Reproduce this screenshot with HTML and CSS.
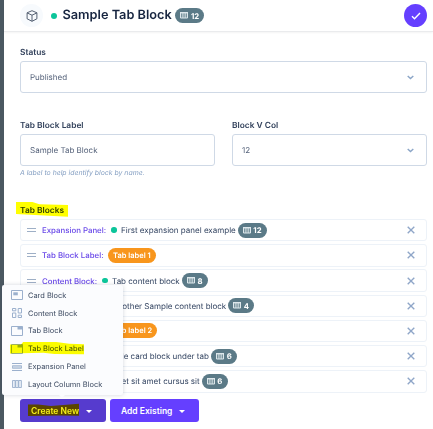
FILE: index.html
```html
<!DOCTYPE html>
<html lang="en">
<head>
<meta charset="utf-8">
<title>Sample Tab Block</title>
<link rel="stylesheet" href="styles.css">
</head>
<body>
<svg class="defs" width="0" height="0">
  <symbol id="cols" viewBox="0 0 8 7"><path d="M.5.5h7v5.500h-7z" fill="#ffffff30" stroke="currentColor" stroke-width="1"/><path d="M2.900.5v5.500M5.200.5v5.500" stroke="currentColor" stroke-width=".9"/><path d="M0 .7h8" stroke="currentColor" stroke-width="1.4"/></symbol>
  <symbol id="x" viewBox="0 0 8 8"><path d="M.7.7l6.600 6.600M7.300.7L.7 7.300" fill="none" stroke="currentColor" stroke-width="1.350"/></symbol>
  <symbol id="down" viewBox="0 0 7 5"><path d="M.7.9l2.800 2.700L6.300.9" fill="none" stroke="currentColor" stroke-width="1.400"/></symbol>
  <symbol id="tab" viewBox="0 0 12 10"><path d="M.5.5h11v9H.5z" fill="none" stroke="currentColor"/><path d="M6.500.5h5v3h-5z" fill="currentColor"/></symbol>
</svg>
<div class="panel">
  <header class="header">
    <span class="cube"><svg width="12" height="12" viewBox="0 0 12 12"><path d="M6 .7l4.900 2.100v6L6 11.300 1.100 8.800v-6zM1.100 2.900L6 5.200l4.900-2.300M6 5.200v6" fill="none" stroke="currentColor" stroke-width=".95" stroke-linejoin="round"/></svg></span>
    <i class="dot dot-title"></i>
    <h1 class="title">Sample Tab Block</h1>
    <span class="badge badge-title"><svg width="8" height="7"><use href="#cols"/></svg>12</span>
    <button class="done" aria-label="Done"><svg width="10" height="8" viewBox="0 0 10 8"><path d="M1 4.300l2.500 2.500L9 1" fill="none" stroke="#fff" stroke-width="1.400"/></svg></button>
  </header>
  <main class="body">
    <section class="field status">
      <label class="label">Status</label>
      <div class="input"><span>Published</span><svg width="7" height="5"><use href="#down"/></svg></div>
    </section>
    <div class="pair">
      <section class="field">
        <label class="label">Tab Block Label</label>
        <div class="input"><span>Sample Tab Block</span></div>
        <p class="help">A label to help identify block by name.</p>
      </section>
      <section class="field">
        <label class="label">Block V Col</label>
        <div class="input"><span>12</span><svg width="7" height="5"><use href="#down"/></svg></div>
      </section>
    </div>
    <h2 class="label blocks-title">Tab Blocks<i class="marker marker-title"></i></h2>
    <div class="rows">
      <div class="row"><i class="grip"></i><b class="kind">Expansion Panel:</b><i class="dot"></i><span class="name">First expansion panel example</span><span class="badge"><svg width="8" height="7"><use href="#cols"/></svg>12</span><svg class="remove" width="8" height="8"><use href="#x"/></svg></div>
      <div class="row"><i class="grip"></i><b class="kind">Tab Block Label:</b><span class="tag">Tab label 1</span><svg class="remove" width="8" height="8"><use href="#x"/></svg></div>
      <div class="row"><i class="grip"></i><b class="kind">Content Block:</b><i class="dot"></i><span class="name">Tab content block</span><span class="badge one"><svg width="8" height="7"><use href="#cols"/></svg>8</span><svg class="remove" width="8" height="8"><use href="#x"/></svg></div>
      <div class="row"><i class="grip"></i><b class="kind">Content Block:</b><i class="dot"></i><span class="name">Another Sample content block</span><span class="badge one"><svg width="8" height="7"><use href="#cols"/></svg>4</span><svg class="remove" width="8" height="8"><use href="#x"/></svg></div>
      <div class="row"><i class="grip"></i><b class="kind">Tab Block Label:</b><span class="tag">Tab label 2</span><svg class="remove" width="8" height="8"><use href="#x"/></svg></div>
      <div class="row"><i class="grip"></i><b class="kind">Card Block:</b><i class="dot"></i><span class="name">Sample card block under tab</span><span class="badge one"><svg width="8" height="7"><use href="#cols"/></svg>6</span><svg class="remove" width="8" height="8"><use href="#x"/></svg></div>
      <div class="row"><i class="grip"></i><b class="kind">Card Block:</b><i class="dot"></i><span class="name">Laoreet sit amet cursus sit</span><span class="badge one"><svg width="8" height="7"><use href="#cols"/></svg>6</span><svg class="remove" width="8" height="8"><use href="#x"/></svg></div>
    </div>
    <div class="actions">
      <button class="btn btn-create"><span>Create New</span><i class="caret"></i><i class="marker marker-create"></i></button>
      <button class="btn btn-add"><span>Add Existing</span><i class="caret"></i></button>
    </div>
  </main>
</div>
<nav class="menu">
  <a class="item"><svg width="12" height="10" viewBox="0 0 12 10"><path d="M.5.5h11v9H.5z" fill="none" stroke="currentColor"/><path d="M2.300 2.300h4.500v3H2.300z" fill="currentColor"/></svg><span>Card Block</span></a>
  <a class="item"><svg width="12" height="10" viewBox="0 0 12 10"><path d="M1.500.5h3.300v2.300H1.500zM1.500 5h3.300v4.500H1.500zM7.200.5h3.300V5H7.200zM7.200 7.200h3.300v2.300H7.200z" fill="none" stroke="currentColor"/></svg><span>Content Block</span></a>
  <a class="item"><svg width="12" height="10"><use href="#tab"/></svg><span>Tab Block</span></a>
  <a class="item"><svg width="12" height="10"><use href="#tab"/></svg><span>Tab Block Label</span><i class="marker marker-menu"></i></a>
  <a class="item"><svg width="12" height="10" viewBox="0 0 12 10"><path d="M1 1.500h10M1 8.500h10" stroke="currentColor"/><path d="M1.500 3.700h9v2.600h-9z" fill="#cbd6e4" stroke="currentColor" stroke-width=".8"/></svg><span>Expansion Panel</span></a>
  <a class="item"><svg width="12" height="10" viewBox="0 0 12 10"><path d="M1.500 1.500h2.700v7H1.500zM4.600 1.500h2.700v7H4.600zM7.700 1.500h2.700v7H7.700z" fill="#e9eff7" stroke="currentColor" stroke-width=".9"/></svg><span>Layout Column Block</span></a>
</nav>
</body>
</html>
```
FILE: styles.css
```css
* { box-sizing: border-box; }
body { margin: 0; width: 433px; height: 429px; overflow: hidden; position: relative; background: #4b5861; font-family: Inter, sans-serif; color: #334461; text-rendering: geometricPrecision; }
.defs { position: absolute; }
svg { flex: none; display: block; }
h1, h2, p { margin: 0; }
button { border: 0; padding: 0; font: inherit; }
.panel { margin-left: 4px; height: 429px; background: #fff; }
.header { height: 32px; display: flex; align-items: center; padding: 0 6px 0 16px; border-bottom: 1px solid #eaebed; box-shadow: 0 1px 2px #0000000c; }
.cube { width: 23px; height: 23px; border-radius: 50%; background: #f7fafd; color: #4c596c; display: grid; place-items: center; }
.dot { width: 5.500px; height: 5.500px; border-radius: 50%; background: #0cc59a; flex: none; margin: 0 4.500px 0 5px; }
.dot-title { width: 6px; height: 6px; margin: 0 5.500px 0 8px; }
.title { font-size: 12.750px; line-height: 16px; padding-top: 1.500px; font-weight: 600; color: #172540; white-space: nowrap; }
.badge { width: 29px; height: 15px; border-radius: 8px; background: #5b7a87; color: #fff; font-size: 7.800px; font-weight: 700; display: flex; align-items: center; justify-content: center; gap: 2.500px; margin-left: 2px; flex: none; }
.badge.one { width: 26px; }
.badge svg { color: #dde7eb; }
.badge-title { margin-left: 3.500px; }
.done { margin-left: auto; width: 23px; height: 23px; border-radius: 50%; background: #653fff; display: grid; place-items: center; }
.body { padding: 15px 6px 0 16px; }
.label { display: block; font-size: 8.400px; line-height: 12px; font-weight: 600; color: #33425c; white-space: nowrap; }
.input { margin-top: 2.300px; height: 31.300px; border: 1px solid #cfd9e6; border-radius: 3px; padding: 1px 12px 0 9px; display: flex; align-items: center; justify-content: space-between; font-size: 8px; color: #55627a; }
.input svg { color: #8ba5c7; }
.pair { display: grid; grid-template-columns: 195px 195px; gap: 17px; margin-top: 27.400px; }
.help { font-size: 6.900px; line-height: 10px; font-style: italic; color: #86a0c3; margin-top: 2.400px; white-space: nowrap; }
.blocks-title { position: relative; margin-top: 26.700px; width: 60px; }
.rows { margin-top: 2.300px; display: grid; gap: 2.700px; }
.row { height: 22.500px; border: 1px solid #edf2f8; border-radius: 3px; display: flex; align-items: center; padding: 0 11px 0 6px; font-size: 8px; white-space: nowrap; }
.grip { width: 9px; height: 4px; border-top: 1px solid #9eafc6; border-bottom: 1px solid #9eafc6; flex: none; margin-right: 6px; }
.kind { font-size: 7.850px; font-weight: 500; color: #6847e8; flex: none; }
.tag { height: 15px; border-radius: 8px; background: #f8961d; color: #fff; font-size: 7.500px; font-weight: 600; padding: 0 5px; line-height: 15px; margin-left: 4.500px; }
.remove { margin-left: auto; color: #8fa6c8; }
.actions { display: flex; gap: 4px; margin-top: 6.500px; }
.btn { position: relative; height: 23px; border-radius: 3px; color: #fff; background: #653fff; font-size: 8.500px; font-weight: 600; display: flex; align-items: center; justify-content: space-between; padding: 1px 14px 0 11px; white-space: nowrap; }
.btn-create { width: 86px; background: #563bce; }
.btn-add { width: 89px; }
.caret { border: 3px solid transparent; border-top-color: currentColor; border-bottom: 0; }
.menu { position: absolute; left: 2px; top: 285px; width: 121px; height: 110px; background: #fbfcfe; border-radius: 2px; box-shadow: 0 0 4px #2b3b5035; padding: 1px 0 0 9px; }
.menu::after { content: ""; position: absolute; left: 57px; top: 110px; border: 3px solid transparent; border-top-color: #fbfcfe; border-bottom: 0; }
.item { position: relative; height: 17.900px; display: flex; align-items: center; gap: 5px; font-size: 7.450px; color: #3b4960; white-space: nowrap; }
.item span { padding-top: .5px; }
.item svg { color: #9bb0cd; }
.marker { position: absolute; background: #ff0; mix-blend-mode: multiply; }
.marker-title { left: -4px; top: -3px; width: 52px; height: 15px; clip-path: polygon(0 0, 30% 0, 45% 18%, 100% 22%, 100% 100%, 0 82%); }
.marker-menu { left: -1px; top: 2px; width: 74px; height: 14px; clip-path: polygon(0 20%, 15% 20%, 18% 0, 60% 0, 80% 15%, 100% 18%, 100% 90%, 60% 88%, 45% 80%, 0 85%); }
.marker-create { left: 8px; top: 4px; width: 51px; height: 14px; background: #5a4500; mix-blend-mode: normal; clip-path: polygon(0 10%, 20% 10%, 45% 20%, 100% 5%, 100% 90%, 60% 88%, 0 92%); }
.btn-create span { position: relative; z-index: 1; color: #f5f019; }
```
